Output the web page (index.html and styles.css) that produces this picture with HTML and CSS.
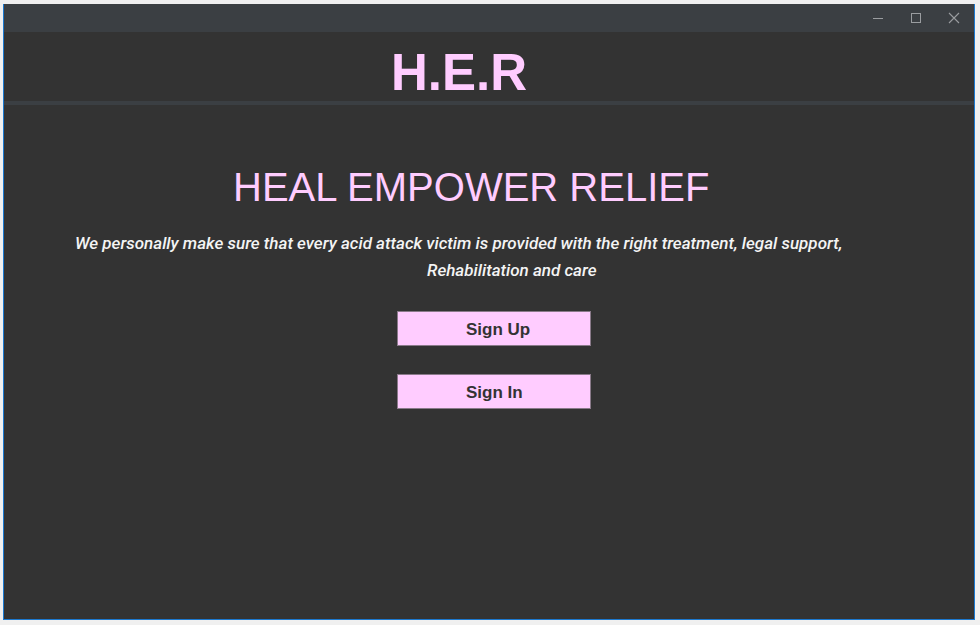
FILE: index.html
```html
<!DOCTYPE html>
<html>
<head>
<meta charset="utf-8">
<link rel="stylesheet" href="styles.css">
</head>
<body>
<div class="window">
  <div class="titlebar">
    <span class="ctl">
      <svg width="12" height="12" viewBox="0 0 12 12"><path d="M1 6.5H11" stroke="#9a9da0" stroke-width="1"/></svg>
    </span>
    <span class="ctl">
      <svg width="12" height="12" viewBox="0 0 12 12"><rect x="1.5" y="1.5" width="9" height="9" fill="none" stroke="#9a9da0" stroke-width="1"/></svg>
    </span>
    <span class="ctl">
      <svg width="12" height="12" viewBox="0 0 12 12"><path d="M1 1L11 11M11 1L1 11" stroke="#9a9da0" stroke-width="1.1"/></svg>
    </span>
  </div>
  <header class="header">
    <h1 class="logo">H.E.R</h1>
  </header>
  <div class="stripe"></div>
  <main class="content">
    <h2 class="tagline">HEAL EMPOWER RELIEF</h2>
    <p class="mission line1">We personally make sure that every acid attack victim is provided with the right treatment, legal support,</p>
    <p class="mission line2">Rehabilitation and care</p>
    <div class="actions">
      <button class="btn">Sign Up</button>
      <button class="btn">Sign In</button>
    </div>
  </main>
</div>
</body>
</html>
```
FILE: styles.css
```css
html, body {
  margin: 0;
  padding: 0;
  background: #f0f0f0;
  width: 980px;
  height: 625px;
  overflow: hidden;
}
.window {
  margin: 4px 0 0 3px;
  width: 970px;
  height: 615px;
  border-left: 1px solid #1c79d0;
  border-right: 1px solid #1c79d0;
  border-bottom: 1px solid #1c79d0;
  background: #333333;
  display: flex;
  flex-direction: column;
}
.titlebar {
  height: 28px;
  background: #3b3f43;
  display: flex;
  justify-content: flex-end;
  align-items: center;
  padding-right: 14px;
  gap: 26px;
}
.ctl {
  width: 12px;
  height: 12px;
  display: block;
}
.ctl svg { display: block; }
.header {
  height: 69px;
  background: #333333;
}
.logo {
  margin: 0;
  padding-top: 15px;
  padding-left: 387px;
  font-family: "Liberation Sans", Arial, sans-serif;
  font-weight: bold;
  font-size: 51px;
  line-height: 52px;
  color: #ffccff;
}
.stripe {
  height: 4px;
  background: #3b3f43;
}
.content {
  flex: 1;
  display: flex;
  flex-direction: column;
  align-items: flex-start;
}
.tagline {
  margin: 62px 0 0 229px;
  font-family: "Liberation Sans", Arial, sans-serif;
  font-weight: normal;
  font-size: 40px;
  line-height: 40px;
  color: #ffccff;
}
.mission {
  margin: 0;
  font-family: Roboto, "Liberation Sans", sans-serif;
  font-style: italic;
  font-weight: 500;
  font-size: 17px;
  line-height: 27px;
  color: #f4f4f4;
  white-space: nowrap;
}
.line1 { margin: 23px 0 0 71px; }
.line2 { margin: 0 0 0 423px; }
.actions {
  margin: 27px 0 0 393px;
  display: flex;
  flex-direction: column;
  gap: 28px;
}
.btn {
  width: 194px;
  height: 35px;
  background: #ffccff;
  border: 1px solid #8a7a8a;
  font-family: "Liberation Sans", Arial, sans-serif;
  font-weight: bold;
  font-size: 17px;
  color: #333333;
  text-align: left;
  padding: 2px 0 0 68px;
  cursor: pointer;
}
```
